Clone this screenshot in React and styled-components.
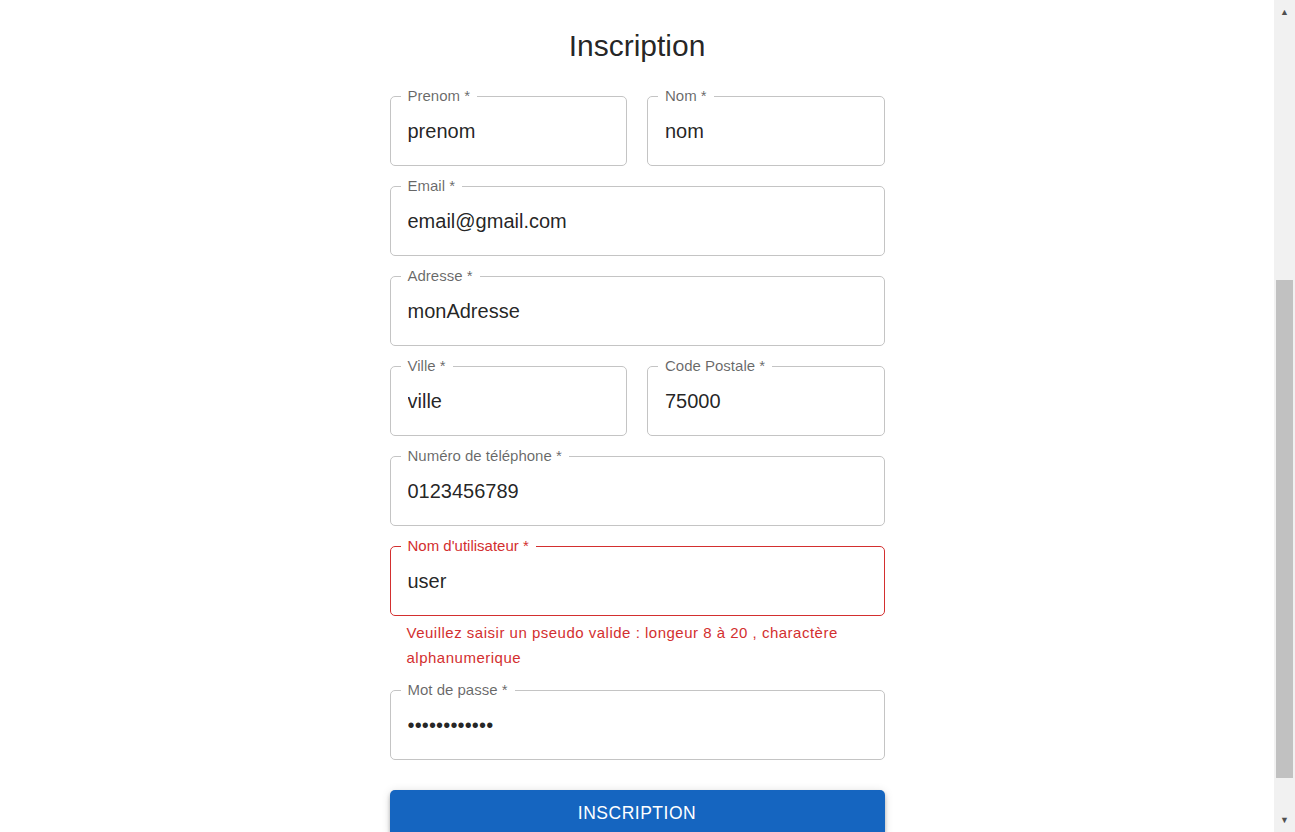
import styled, { createGlobalStyle } from 'styled-components';

const fields = [
  [
    { label: 'Prenom', value: 'prenom' },
    { label: 'Nom', value: 'nom' },
  ],
  [{ label: 'Email', value: 'email@gmail.com' }],
  [{ label: 'Adresse', value: 'monAdresse' }],
  [
    { label: 'Ville', value: 'ville' },
    { label: 'Code Postale', value: '75000' },
  ],
  [{ label: 'Numéro de téléphone', value: '0123456789' }],
  [
    {
      label: "Nom d'utilisateur",
      value: 'user',
      error: 'Veuillez saisir un pseudo valide : longeur 8 à 20 , charactère alphanumerique',
    },
  ],
  [{ label: 'Mot de passe', value: 'motdepasse12', type: 'password' }],
];

const TextField = ({ label, value, error, type = 'text' }) => (
  <FieldWrap>
    <Outline $error={!!error}>
      <Legend $error={!!error}>{label} *</Legend>
      <Input type={type} defaultValue={value} readOnly />
    </Outline>
    {error && <HelperText>{error}</HelperText>}
  </FieldWrap>
);

const App = () => {
  return (
    <>
      <GlobalStyle />
      <Screen>
        <Page>
          <Form onSubmit={(e) => e.preventDefault()}>
            <Title>Inscription</Title>
            <Fields>
              {fields.map((row, i) => (
                <Row key={i} $cols={row.length}>
                  {row.map((f) => (
                    <TextField key={f.label} {...f} />
                  ))}
                </Row>
              ))}
            </Fields>
            <SubmitButton type="submit">Inscription</SubmitButton>
          </Form>
        </Page>
        <ScrollTrack>
          <Arrow>▲</Arrow>
          <ThumbArea>
            <Thumb />
          </ThumbArea>
          <Arrow>▼</Arrow>
        </ScrollTrack>
      </Screen>
    </>
  );
};

export default App;

const GlobalStyle = createGlobalStyle`
  * { box-sizing: border-box; }
  body {
    margin: 0;
    background: #fff;
    font-family: "Liberation Sans", Arial, sans-serif;
  }
`;

const Screen = styled.div`
  display: flex;
  height: 832px;
  overflow: hidden;
`;

const Page = styled.div`
  flex: 1;
  display: flex;
  justify-content: center;
`;

const Form = styled.form`
  width: 495px;
  display: flex;
  flex-direction: column;
  align-items: stretch;
  padding-top: 26px;
`;

const Title = styled.h1`
  margin: 0 0 22px;
  text-align: center;
  font-size: 30px;
  line-height: 40px;
  font-weight: 400;
  color: rgba(0, 0, 0, 0.87);
`;

const Fields = styled.div`
  display: flex;
  flex-direction: column;
  gap: 12px;
`;

const Row = styled.div`
  display: grid;
  grid-template-columns: repeat(${(p) => p.$cols}, 1fr);
  column-gap: 20px;
`;

const FieldWrap = styled.div`
  display: flex;
  flex-direction: column;
`;

const Outline = styled.fieldset`
  margin: 0;
  padding: 0 10px;
  min-width: 0;
  border: 1px solid ${(p) => (p.$error ? '#d32f2f' : '#c4c4c4')};
  border-radius: 5px;
`;

const Legend = styled.legend`
  padding: 0 7px;
  font-size: 15px;
  line-height: 16px;
  color: ${(p) => (p.$error ? '#d32f2f' : 'rgba(0, 0, 0, 0.6)')};
  white-space: nowrap;
`;

const Input = styled.input`
  display: block;
  width: 100%;
  height: 61px;
  margin: 0;
  padding: 0 7px 6px;
  border: none;
  outline: none;
  background: transparent;
  font-family: inherit;
  font-size: 20px;
  color: rgba(0, 0, 0, 0.87);
  letter-spacing: ${(p) => (p.type === 'password' ? '0.15px' : 'normal')};
`;

const HelperText = styled.p`
  margin: 4px 17px 0;
  font-size: 15px;
  line-height: 25px;
  letter-spacing: 0.5px;
  color: #d32f2f;
`;

const SubmitButton = styled.button`
  margin-top: 30px;
  height: 46px;
  flex-shrink: 0;
  border: none;
  border-radius: 5px;
  background: #1565c0;
  color: #fff;
  font-family: inherit;
  font-size: 17.5px;
  font-weight: 500;
  letter-spacing: 0.5px;
  text-transform: uppercase;
  box-shadow: 0 2px 4px -1px rgba(0, 0, 0, 0.2), 0 4px 5px 0 rgba(0, 0, 0, 0.14),
    0 1px 10px 0 rgba(0, 0, 0, 0.12);
  cursor: pointer;
`;

const ScrollTrack = styled.div`
  width: 21px;
  flex-shrink: 0;
  background: #f1f1f1;
  display: flex;
  flex-direction: column;
  align-items: center;
`;

const Arrow = styled.div`
  height: 24px;
  display: flex;
  align-items: center;
  justify-content: center;
  font-size: 9px;
  color: #505050;
`;

const ThumbArea = styled.div`
  flex: 1;
  width: 100%;
  padding: 256px 2px 30px;
  display: flex;
`;

const Thumb = styled.div`
  flex: 1;
  background: #c1c1c1;
`;
